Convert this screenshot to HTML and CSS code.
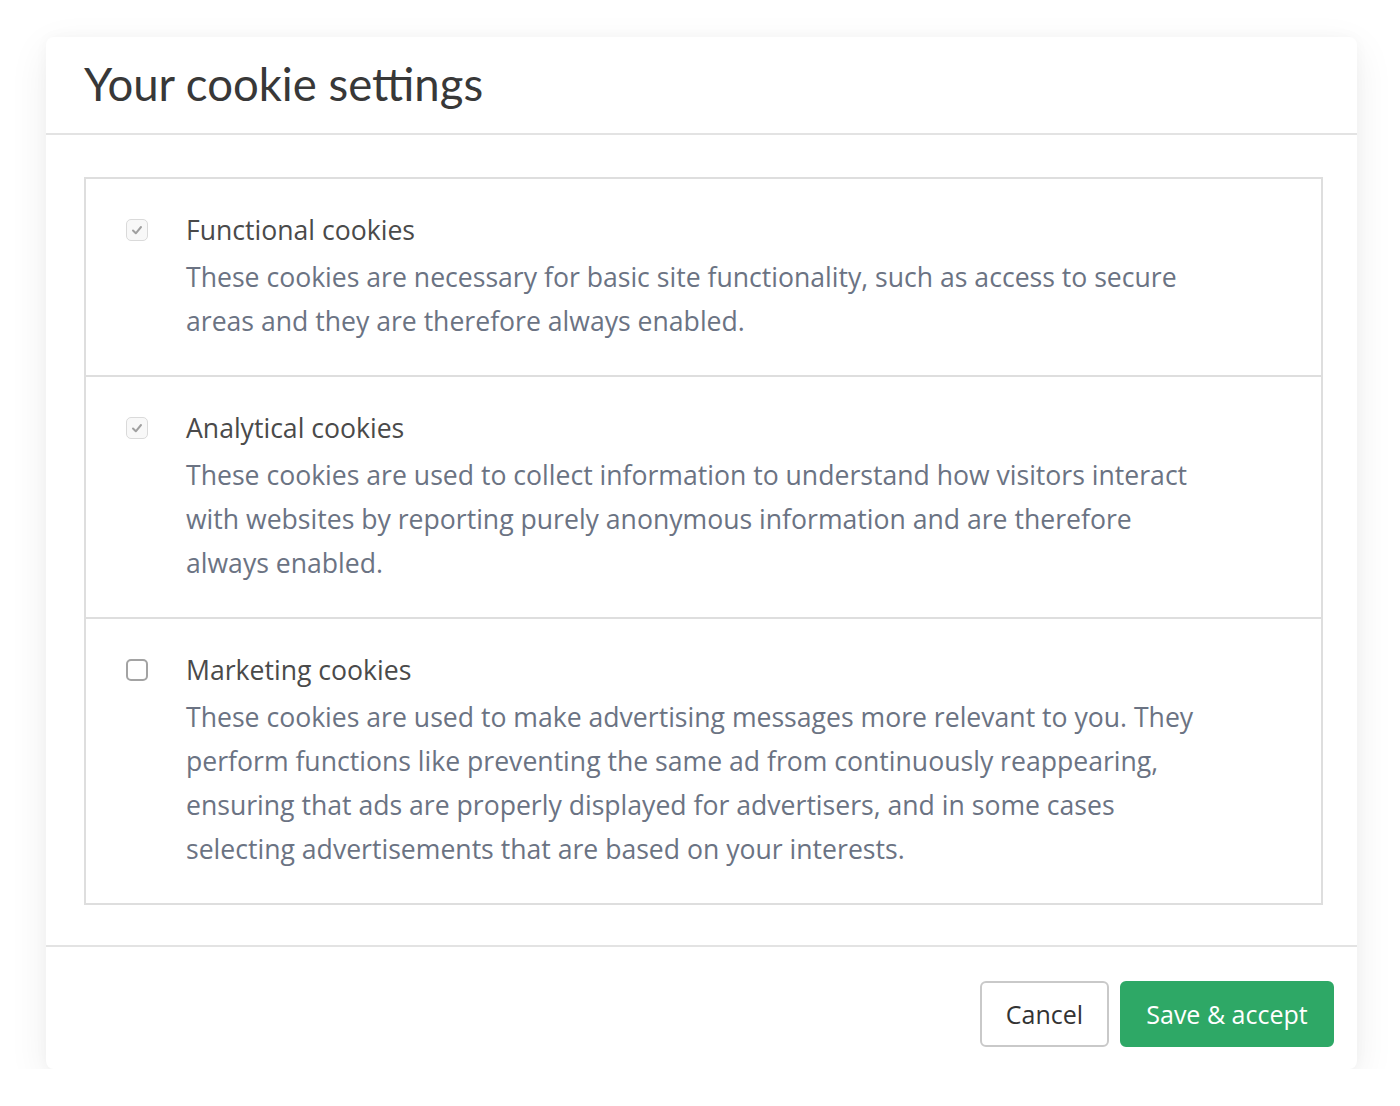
FILE: index.html
```html
<!DOCTYPE html>
<html lang="en">
<head>
<meta charset="utf-8">
<title>Your cookie settings</title>
<link rel="stylesheet" href="styles.css">
</head>
<body>
<div class="page">
  <div class="modal">
    <div class="modal-header">
      <h1 class="title">Your cookie settings</h1>
    </div>
    <div class="modal-body">
      <div class="options">
        <div class="option">
          <span class="check check-disabled">
            <svg viewBox="0 0 22 22" width="22" height="22"><path d="M7 11.5 L9.8 14.3 L15 8" fill="none" stroke="#a0a0a0" stroke-width="2" stroke-linecap="round" stroke-linejoin="round"/></svg>
          </span>
          <div class="option-text">
            <div class="option-label">Functional cookies</div>
            <p class="option-desc">These cookies are necessary for basic site functionality, such as access to secure areas and they are therefore always enabled.</p>
          </div>
        </div>
        <div class="option">
          <span class="check check-disabled">
            <svg viewBox="0 0 22 22" width="22" height="22"><path d="M7 11.5 L9.8 14.3 L15 8" fill="none" stroke="#a0a0a0" stroke-width="2" stroke-linecap="round" stroke-linejoin="round"/></svg>
          </span>
          <div class="option-text">
            <div class="option-label">Analytical cookies</div>
            <p class="option-desc">These cookies are used to collect information to understand how visitors interact with websites by reporting purely anonymous information and are therefore always enabled.</p>
          </div>
        </div>
        <div class="option">
          <span class="check check-empty"></span>
          <div class="option-text">
            <div class="option-label">Marketing cookies</div>
            <p class="option-desc">These cookies are used to make advertising messages more relevant to you. They perform functions like preventing the same ad from continuously reappearing, ensuring that ads are properly displayed for advertisers, and in some cases selecting advertisements that are based on your interests.</p>
          </div>
        </div>
      </div>
    </div>
    <div class="modal-footer">
      <button class="btn btn-cancel">Cancel</button>
      <button class="btn btn-save">Save &amp; accept</button>
    </div>
  </div>
</div>
</body>
</html>
```
FILE: styles.css
```css
* { box-sizing: border-box; }
html, body { margin: 0; padding: 0; background: #ffffff; }
body { font-family: "Open Sans", Lato, sans-serif; }

.page {
  padding: 37px 0 0 46px;
}

.modal {
  width: 1311px;
  background: #fff;
  border-radius: 8px;
  box-shadow: 0 12px 40px rgba(0, 0, 0, 0.07), 0 0 14px rgba(0, 0, 0, 0.03);
}

.modal-header {
  height: 98px;
  padding: 0 38px;
  border-bottom: 2px solid #e3e3e3;
  display: flex;
  align-items: center;
}

.title {
  margin: 0 0 4px;
  font-family: Lato, "Open Sans", sans-serif;
  font-size: 45.5px;
  font-weight: 400;
  color: #383838;
}

.modal-body {
  padding: 42px 34px 40px 38px;
}

.options {
  border: 2px solid #dedede;
}

.option {
  display: flex;
  align-items: flex-start;
  padding: 29px 40px 32px 40px;
}
.option + .option { border-top: 2px solid #dedede; }

.check {
  flex: 0 0 22px;
  width: 22px;
  height: 22px;
  margin-top: 11px;
  margin-right: 38px;
  border-radius: 5px;
  display: block;
}
.check svg { display: block; }
.check-disabled {
  border: 1.5px solid #dadada;
  background: #f8f8f8;
}
.check-disabled svg { margin: -1.5px; }
.check-empty {
  border: 2px solid #a3a3a3;
  background: #fff;
}

.option-text {
  width: 1012px;
}

.option-label {
  font-size: 26.6px;
  line-height: 44px;
  color: #4a4a4a;
}

.option-desc {
  margin: 3px 0 0;
  font-size: 26.6px;
  line-height: 44px;
  color: #6b7383;
}

.modal-footer {
  border-top: 2px solid #e3e3e3;
  padding: 34px 23px 22px;
  display: flex;
  justify-content: flex-end;
  gap: 11px;
}

.btn {
  height: 66px;
  font-family: "Open Sans", Lato, sans-serif;
  font-size: 25px;
  border-radius: 6px;
  cursor: pointer;
}
.btn-cancel {
  width: 129px;
  background: #fff;
  color: #333;
  border: 2px solid #c9c9c9;
}
.btn-save {
  width: 214px;
  background: #2ea866;
  color: #fff;
  border: 2px solid #2ea866;
}
```
